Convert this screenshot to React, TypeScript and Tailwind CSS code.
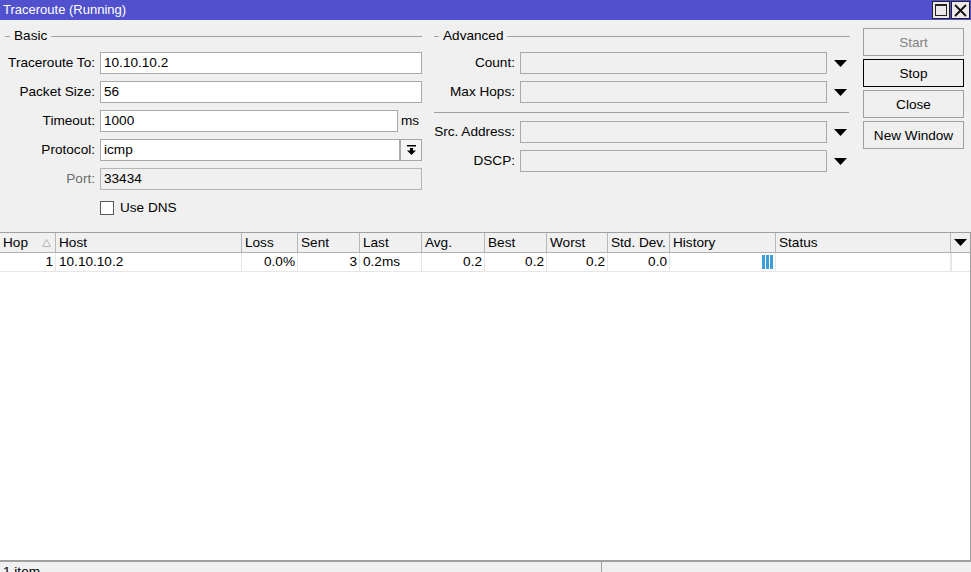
import React from "react";

const Tri = () => (
  <svg width="13" height="7" viewBox="0 0 13 7" className="shrink-0">
    <polygon points="0,0 13,0 6.5,7" fill="#000" />
  </svg>
);

function Legend({ label }: { label: string }) {
  return (
    <div className="flex items-center h-[16px]">
      <div className="w-[5px] h-px bg-[#a0a0a0]" />
      <span className="px-[4px]">{label}</span>
      <div className="flex-1 h-px bg-[#a0a0a0]" />
    </div>
  );
}

function BasicRow({ label, children, className = "" }: { label: string; children: React.ReactNode; className?: string }) {
  return (
    <div className={"flex items-center h-[22px] " + className}>
      <div className="w-[90px] text-right whitespace-nowrap">{label}</div>
      <div className="ml-[5px] flex items-center">{children}</div>
    </div>
  );
}

function AdvRow({ label, className = "" }: { label: string; className?: string }) {
  return (
    <div className={"flex items-center h-[22px] " + className}>
      <div className="w-[81px] text-right whitespace-nowrap">{label}</div>
      <div className="ml-[5px] w-[307px] h-[22px] border border-[#a9a9a9] bg-[#f0f0f0]" />
      <div className="ml-[7px] flex items-center">
        <Tri />
      </div>
    </div>
  );
}

const cols: { name: string; w: string; align: "l" | "r"; val: React.ReactNode }[] = [
  { name: "Hop", w: "w-[56px]", align: "r", val: "1" },
  { name: "Host", w: "w-[186px]", align: "l", val: "10.10.10.2" },
  { name: "Loss", w: "w-[56px]", align: "r", val: "0.0%" },
  { name: "Sent", w: "w-[62px]", align: "r", val: "3" },
  { name: "Last", w: "w-[62px]", align: "l", val: "0.2ms" },
  { name: "Avg.", w: "w-[63px]", align: "r", val: "0.2" },
  { name: "Best", w: "w-[62px]", align: "r", val: "0.2" },
  { name: "Worst", w: "w-[61px]", align: "r", val: "0.2" },
  { name: "Std. Dev.", w: "w-[62px]", align: "r", val: "0.0" },
  {
    name: "History",
    w: "w-[106px]",
    align: "r",
    val: (
      <span className="flex gap-[1px] h-[14px]">
        <span className="w-[3px] h-full bg-[#3c9fd9]" />
        <span className="w-[3px] h-full bg-[#3c9fd9]" />
        <span className="w-[3px] h-full bg-[#3c9fd9]" />
      </span>
    ),
  },
  { name: "Status", w: "w-[175px]", align: "l", val: "" },
];

export default function App() {
  return (
    <div className="w-[971px] h-[572px] overflow-hidden flex flex-col bg-[#f0f0f0] text-black text-[13.6px] leading-[16px] font-['Liberation_Sans',Arial,sans-serif]">
      {/* Title bar */}
      <div className="shrink-0 h-[20px] bg-[#5151cd] flex items-center">
        <span className="pl-[3px] text-white text-[13px] flex-1">Traceroute (Running)</span>
        <div className="flex h-[20px] items-start pt-[1px] pr-[1px] gap-[1px]">
          <div className="w-[18px] h-[18px] border border-[#222] bg-[#ece8ec] flex items-center justify-center">
            <div className="w-[12px] h-[12px] border border-[#222] border-t-2" />
          </div>
          <div className="w-[19px] h-[18px] border border-[#222] bg-[#ece8ec] flex items-center justify-center">
            <svg width="13" height="13" viewBox="0 0 13 13">
              <path d="M1 1 L12 12 M12 1 L1 12" stroke="#111" strokeWidth="1.8" />
            </svg>
          </div>
        </div>
      </div>

      {/* Top panel */}
      <div className="shrink-0 h-[212px] flex pt-[8px]">
        {/* Basic */}
        <div className="ml-[5px] w-[417px] flex flex-col">
          <Legend label="Basic" />
          <BasicRow label="Traceroute To:" className="mt-[8px]">
            <div className="w-[322px] h-[22px] border border-[#a9a9a9] bg-white px-[3px] flex items-center">10.10.10.2</div>
          </BasicRow>
          <BasicRow label="Packet Size:" className="mt-[7px]">
            <div className="w-[322px] h-[22px] border border-[#a9a9a9] bg-white px-[3px] flex items-center">56</div>
          </BasicRow>
          <BasicRow label="Timeout:" className="mt-[7px]">
            <div className="w-[298px] h-[22px] border border-[#a9a9a9] bg-white px-[3px] flex items-center">1000</div>
            <span className="ml-[3px]">ms</span>
          </BasicRow>
          <BasicRow label="Protocol:" className="mt-[7px]">
            <div className="w-[300px] h-[22px] border border-[#a9a9a9] bg-white px-[3px] flex items-center">icmp</div>
            <div className="w-[22px] h-[22px] border border-[#a9a9a9] bg-[#f4f4f4] flex items-center justify-center">
              <svg width="9" height="10" viewBox="0 0 9 10">
                <rect x="0" y="0" width="9" height="1.5" fill="#000" />
                <rect x="3" y="3" width="3" height="3" fill="#000" />
                <polygon points="0,5.5 9,5.5 4.5,10" fill="#000" />
              </svg>
            </div>
          </BasicRow>
          <div className="flex items-center h-[22px] mt-[7px]">
            <div className="w-[90px] text-right text-[#6d6d6d]">Port:</div>
            <div className="ml-[5px] w-[322px] h-[22px] border border-[#b5b5b5] bg-[#f0f0f0] px-[3px] flex items-center">33434</div>
          </div>
          <div className="flex items-center mt-[10px] ml-[95px]">
            <div className="w-[14px] h-[14px] border border-[#5a5a5a] bg-white" />
            <span className="ml-[6px]">Use DNS</span>
          </div>
        </div>

        {/* Advanced */}
        <div className="ml-[12px] w-[416px] flex flex-col">
          <Legend label="Advanced" />
          <AdvRow label="Count:" className="mt-[8px]" />
          <AdvRow label="Max Hops:" className="mt-[7px]" />
          <div className="mt-[9px] h-px w-[415px] bg-[#a0a0a0]" />
          <AdvRow label="Src. Address:" className="mt-[8px]" />
          <AdvRow label="DSCP:" className="mt-[7px]" />
        </div>

        {/* Buttons */}
        <div className="ml-[13px] w-[101px] flex flex-col gap-[3px]">
          <div className="h-[28px] border border-[#a0a0a0] bg-[#f0f0f0] flex items-center justify-center pt-[1px] text-[#838383]">Start</div>
          <div className="h-[28px] border border-black bg-[#f0f0f0] flex items-center justify-center pt-[1px]">Stop</div>
          <div className="h-[28px] border border-[#a0a0a0] bg-[#f0f0f0] flex items-center justify-center pt-[1px]">Close</div>
          <div className="h-[28px] border border-[#a0a0a0] bg-[#f0f0f0] flex items-center justify-center pt-[1px]">New Window</div>
        </div>
      </div>

      {/* Table */}
      <div className="shrink-0 h-[328px] flex flex-col border-t border-[#a0a0a0] border-r bg-white">
        <div className="shrink-0 h-[20px] flex bg-[#f0f0f0] border-b border-[#b0b0b0]">
          {cols.map((c) => (
            <div key={c.name} className={c.w + " shrink-0 h-full border-r border-[#b8b8b8] px-[3px] flex items-center justify-between"}>
              <span className="whitespace-nowrap">{c.name}</span>
              {c.name === "Hop" && (
                <svg width="9" height="8" viewBox="0 0 9 8" className="mr-[1px]">
                  <polygon points="4.5,0.5 8.5,7.5 0.5,7.5" fill="none" stroke="#b4b4b4" strokeWidth="1" />
                </svg>
              )}
            </div>
          ))}
          <div className="flex-1 flex items-center justify-center">
            <Tri />
          </div>
        </div>
        <div className="shrink-0 h-[19px] flex border-b border-[#e6e6e6]">
          {cols.map((c) => (
            <div
              key={c.name}
              className={
                c.w +
                " shrink-0 h-full border-r border-[#e6e6e6] flex items-center whitespace-nowrap " +
                (c.align === "r" ? "justify-end pr-[2px] pl-[3px]" : "justify-start px-[3px]")
              }
            >
              {c.val}
            </div>
          ))}
          <div className="flex-1 border-l border-[#e6e6e6]" />
        </div>
        <div className="flex-1" />
      </div>

      {/* Status bar */}
      <div className="shrink-0 h-[22px] flex border-t-2 border-[#a0a0a0] bg-[#f0f0f0]">
        <div className="w-[602px] border-r border-[#a0a0a0] px-[3px] pt-[2px]">1 item</div>
        <div className="flex-1" />
      </div>
    </div>
  );
}
